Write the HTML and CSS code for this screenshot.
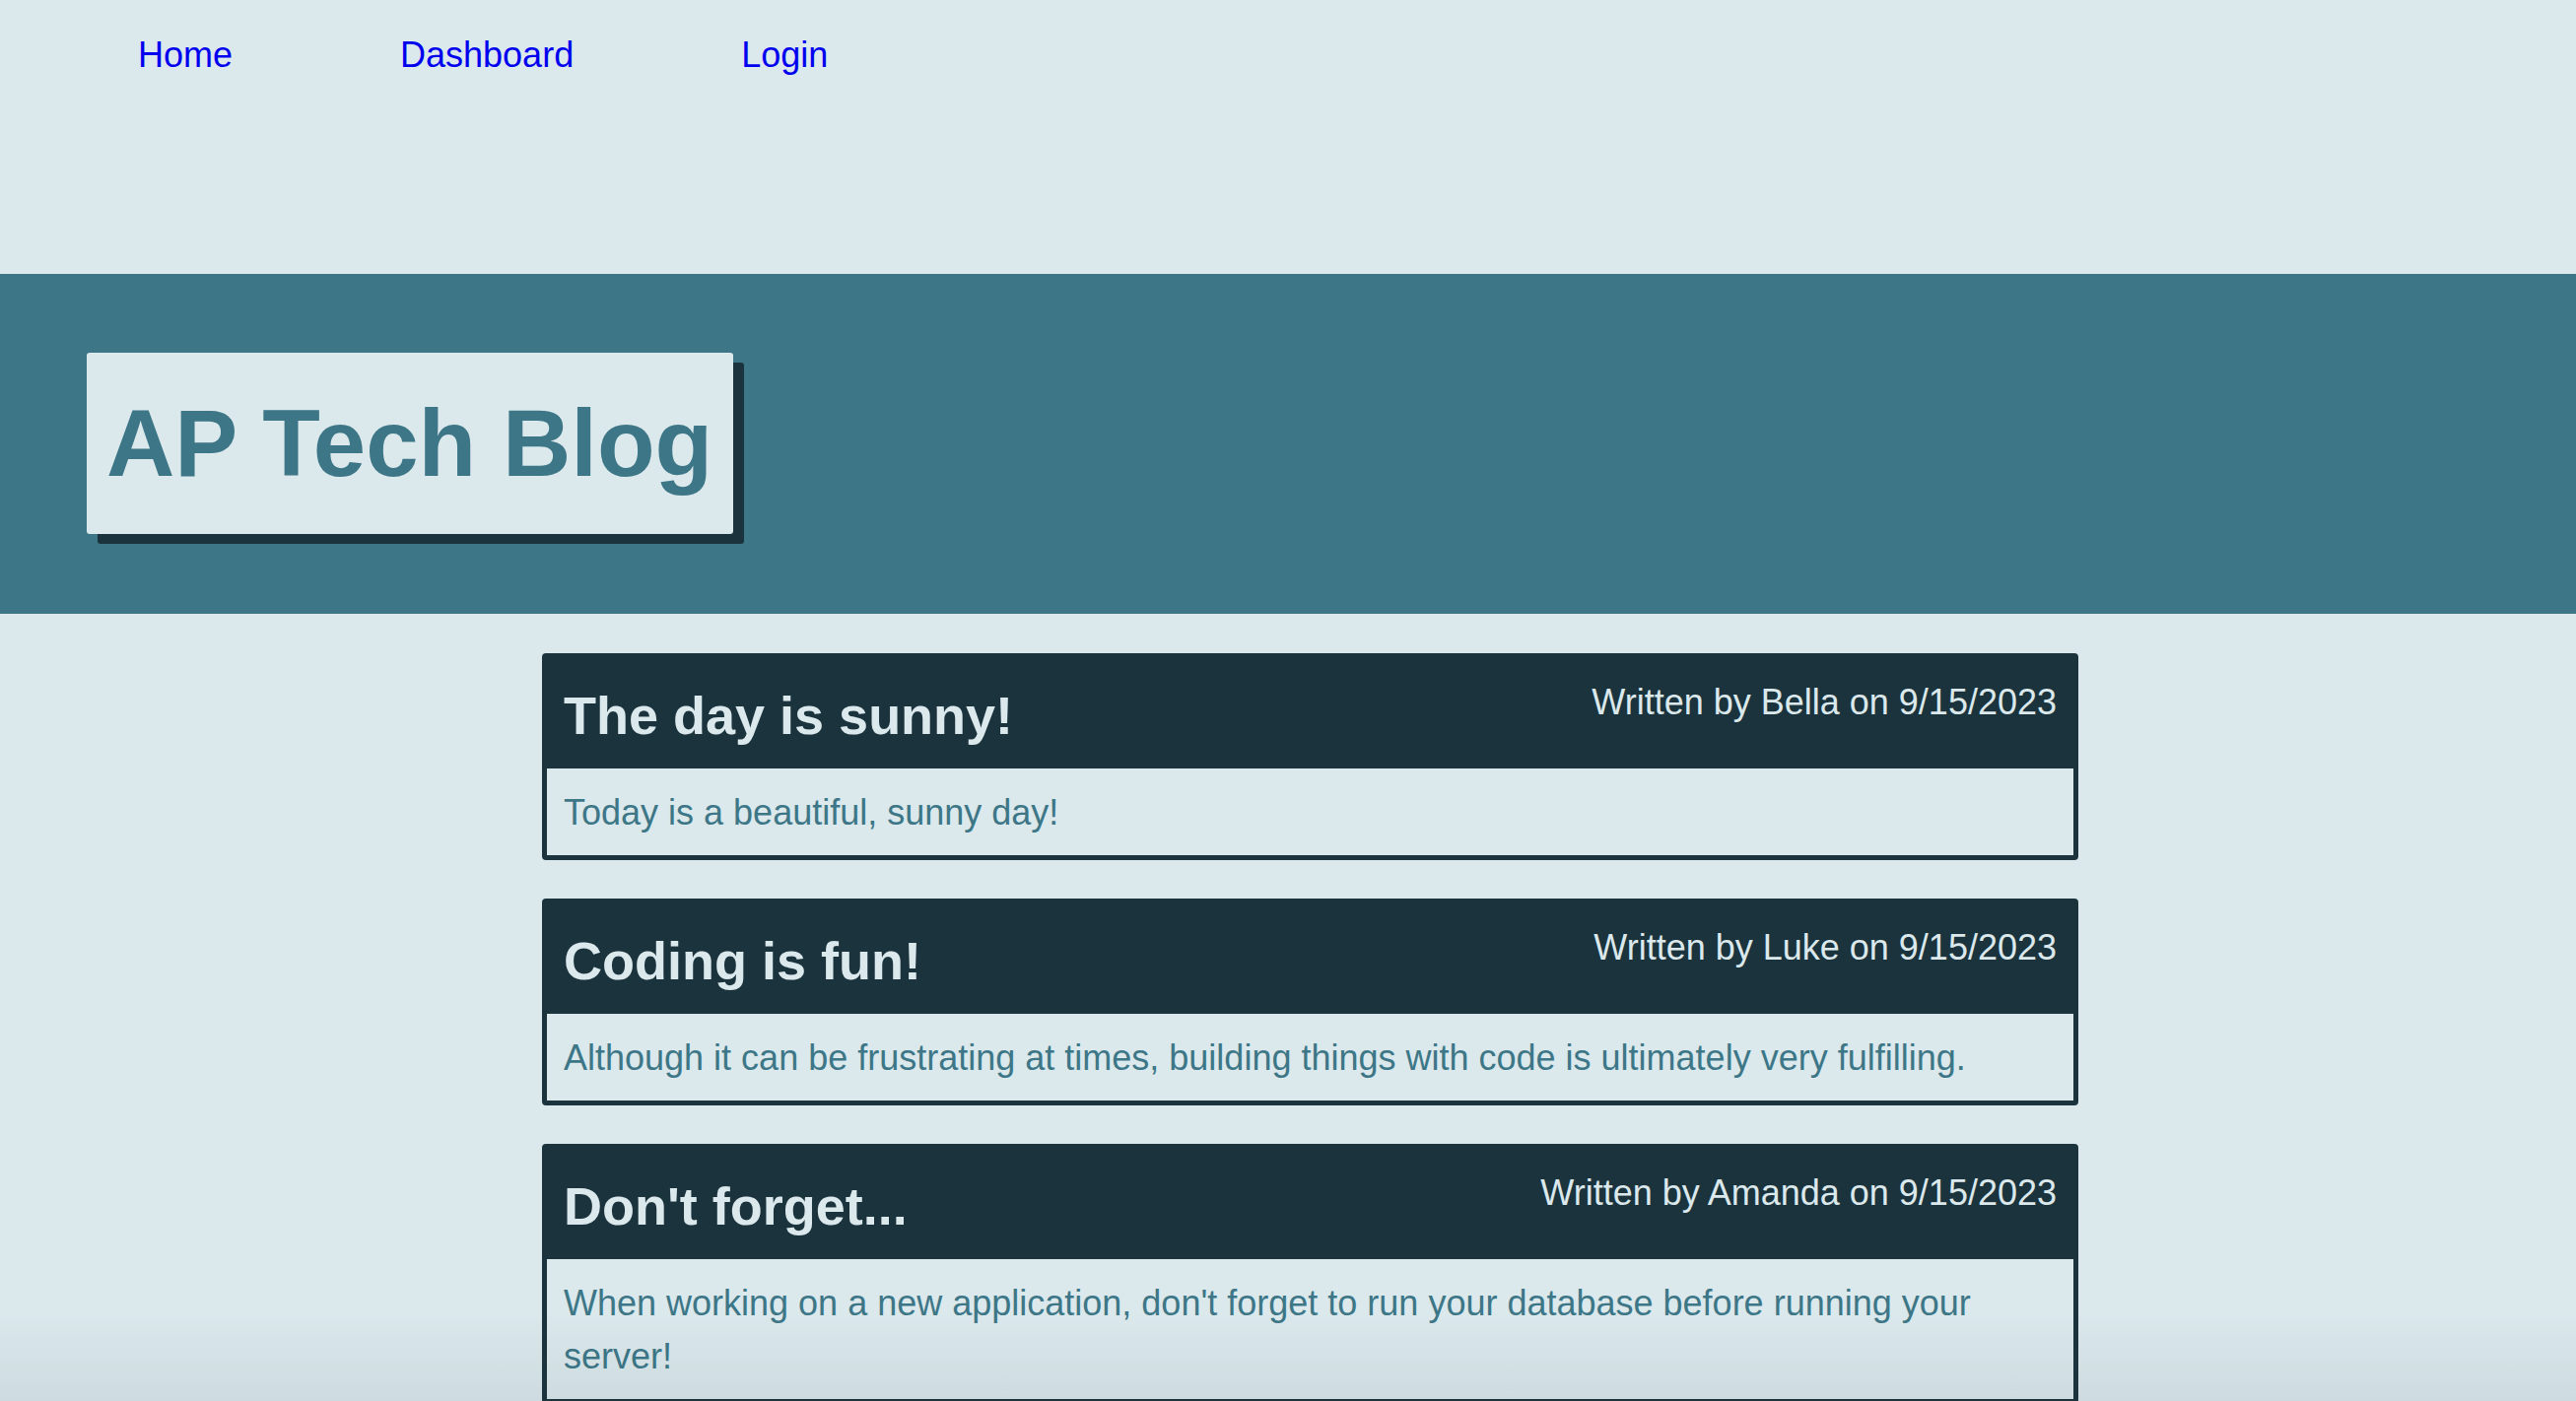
FILE: index.html
```html
<!DOCTYPE html>
<html lang="en">
<head>
<meta charset="utf-8">
<title>AP Tech Blog</title>
<link rel="stylesheet" href="styles.css">
</head>
<body>
  <nav class="nav">
    <a class="nav-link" href="#">Home</a>
    <a class="nav-link" href="#">Dashboard</a>
    <a class="nav-link" href="#">Login</a>
  </nav>
  <header class="banner">
    <h1 class="site-title">AP Tech Blog</h1>
  </header>
  <main class="posts">
    <article class="post">
      <div class="post-head">
        <h2 class="post-title">The day is sunny!</h2>
        <p class="post-meta">Written by Bella on 9/15/2023</p>
      </div>
      <div class="post-body">
        <p>Today is a beautiful, sunny day!</p>
      </div>
    </article>
    <article class="post">
      <div class="post-head">
        <h2 class="post-title">Coding is fun!</h2>
        <p class="post-meta">Written by Luke on 9/15/2023</p>
      </div>
      <div class="post-body">
        <p>Although it can be frustrating at times, building things with code is ultimately very fulfilling.</p>
      </div>
    </article>
    <article class="post">
      <div class="post-head">
        <h2 class="post-title">Don't forget...</h2>
        <p class="post-meta">Written by Amanda on 9/15/2023</p>
      </div>
      <div class="post-body">
        <p>When working on a new application, don't forget to run your database before running your server!</p>
      </div>
    </article>
  </main>
  <div class="bottom-shade"></div>
</body>
</html>
```
FILE: styles.css
```css
html, body {
  margin: 0;
  padding: 0;
}

body {
  background: #dbe8ec;
  font-family: "Liberation Sans", Arial, Helvetica, sans-serif;
  font-size: 36px;
  color: #3d7787;
}

.nav {
  height: 278px;
  box-sizing: border-box;
  padding: 35px 0 0 140px;
  display: flex;
  align-items: flex-start;
  gap: 170px;
}

.nav-link {
  color: #0000ee;
  text-decoration: none;
  font-size: 36px;
  line-height: 41px;
}

.banner {
  background: #3d7787;
  height: 345px;
  box-sizing: border-box;
  padding: 80px 0 0 88px;
  display: flex;
  align-items: flex-start;
}

.site-title {
  margin: 0;
  height: 184px;
  box-sizing: border-box;
  padding: 0 21px 0 20px;
  display: flex;
  align-items: center;
  background: #dbe8ec;
  color: #3d7787;
  font-size: 96px;
  font-weight: bold;
  border-radius: 3px;
  box-shadow: 11px 10px 0 #1b333d;
}

.posts {
  width: 1559px;
  margin: 40px 0 0 550px;
  display: flex;
  flex-direction: column;
  gap: 39px;
}

.post {
  border: 5px solid #1b333d;
  border-radius: 4px;
  background: #dbe8ec;
}

.post-head {
  background: #1b333d;
  color: #dbe8ec;
  height: 112px;
  box-sizing: border-box;
  padding: 27px 17px 0 17px;
  display: flex;
  justify-content: space-between;
  align-items: flex-start;
}

.post-title {
  margin: 0;
  font-size: 54px;
  font-weight: bold;
  line-height: 62px;
}

.post-meta {
  margin: -3px 0 0 0;
  font-size: 36px;
  line-height: 41px;
}

.post-body {
  padding: 18px 17px 16px 17px;
}

.post-body p {
  margin: 0;
  font-size: 36px;
  line-height: 54px;
  color: #3d7787;
}

.bottom-shade {
  position: fixed;
  left: 0;
  right: 0;
  bottom: 0;
  height: 90px;
  pointer-events: none;
  background: linear-gradient(to bottom, rgba(30, 60, 70, 0), rgba(30, 60, 70, 0.07));
}
```
